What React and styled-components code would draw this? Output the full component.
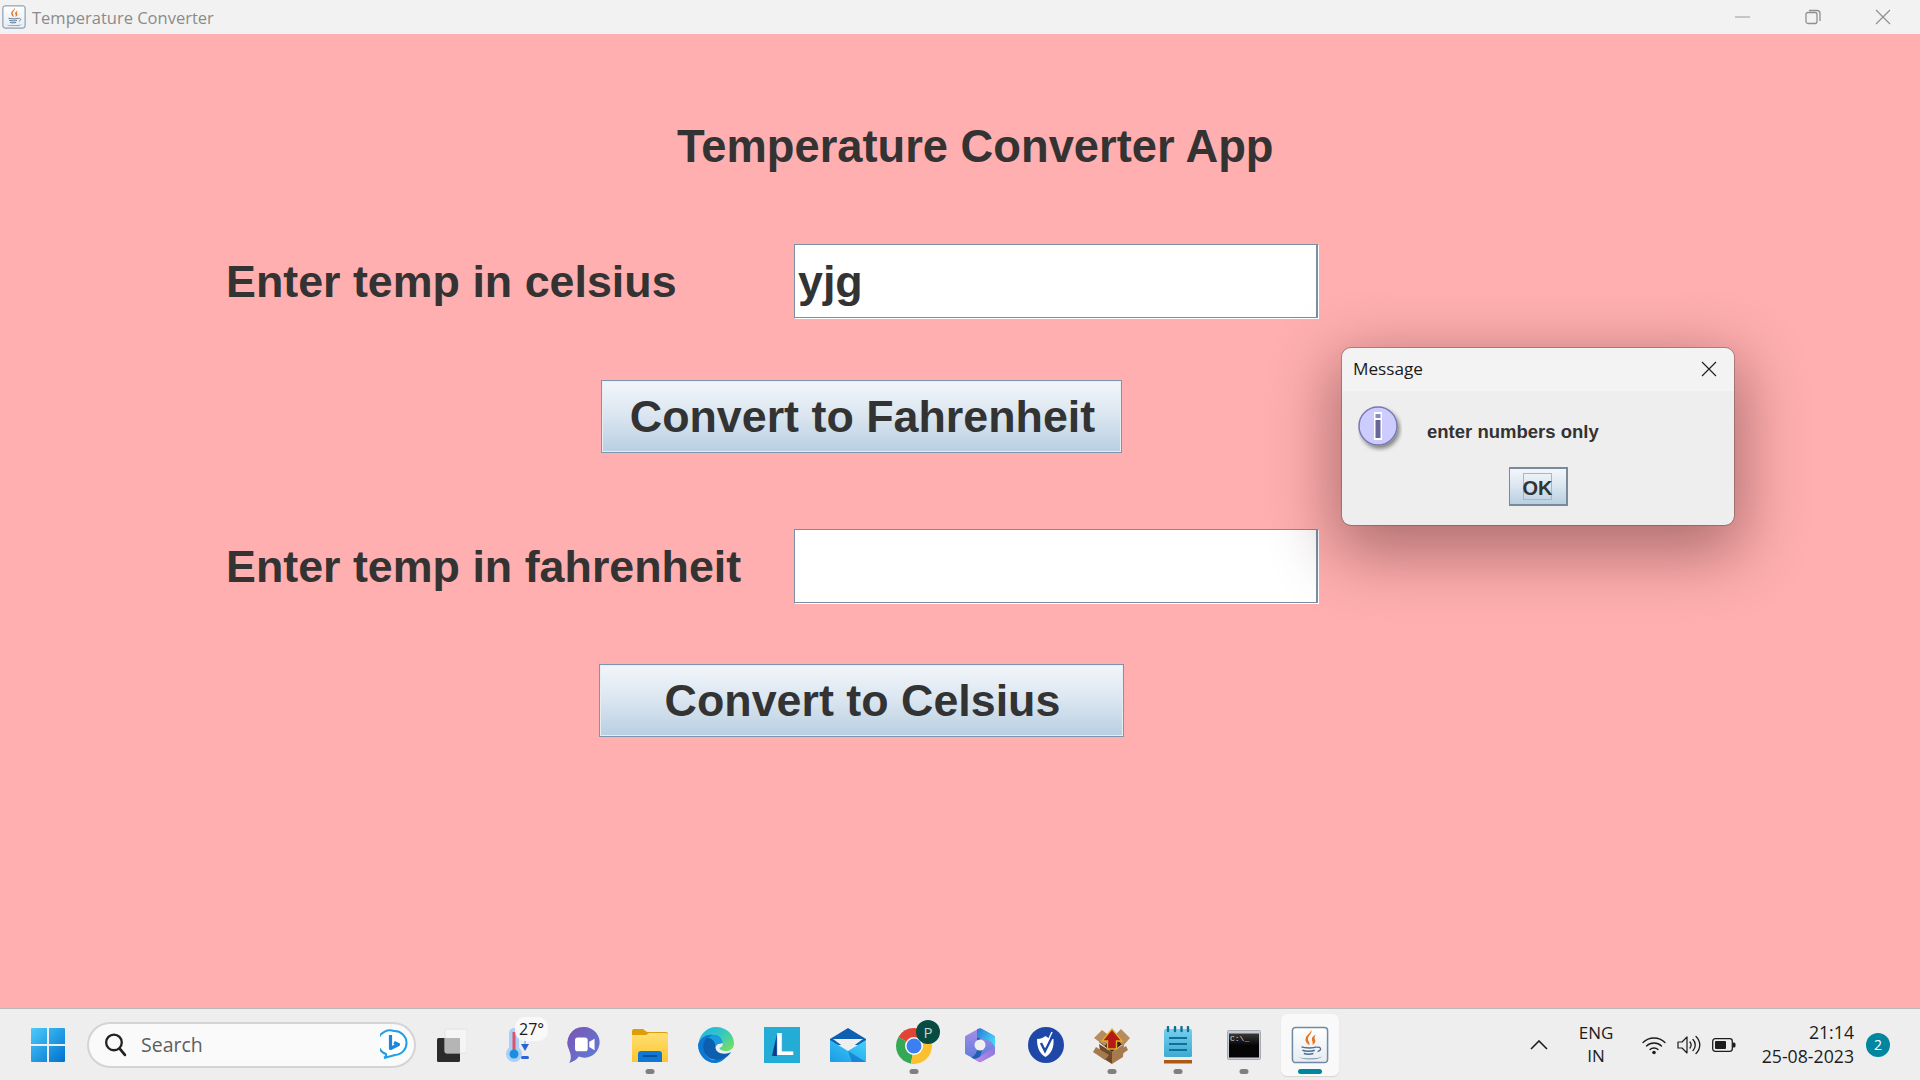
import styled, { createGlobalStyle } from "styled-components";

const GlobalStyle = createGlobalStyle`
  html, body { margin: 0; padding: 0; height: 100%; overflow: hidden; }
  body { font-family: "Liberation Sans", Arial, sans-serif; }
`;

const Screen = styled.div`
  position: relative;
  width: 1920px;
  height: 1080px;
  display: flex;
  flex-direction: column;
  background: #ffafaf;
`;

const TitleBar = styled.header`
  height: 34px;
  flex: none;
  display: flex;
  align-items: center;
  background: #f2f2f2;
  padding: 0 2px;
`;

const TitleText = styled.span`
  font-family: "Open Sans", sans-serif;
  font-size: 16.5px;
  color: #8b8b8b;
  flex: 1;
  margin: 0 0 0 6px;
`;

const WinButton = styled.div`
  width: 70px;
  height: 34px;
  display: flex;
  align-items: center;
  justify-content: center;
`;

const Main = styled.main`
  flex: 1;
  display: flex;
  flex-direction: column;
  color: #333333;
  font-weight: 700;
`;

const AppTitle = styled.h1`
  margin: 88px 0 0 677px;
  font-size: 45.3px;
  line-height: 50px;
  font-weight: 700;
`;

const FieldRow = styled.div`
  display: flex;
  align-items: center;
  padding-left: 226px;
  margin-top: ${(p) => p.$top}px;
`;

const FieldLabel = styled.label`
  width: 568px;
  font-size: 44.8px;
  line-height: 74px;
`;

const TextBox = styled.div`
  box-sizing: border-box;
  width: 524px;
  height: 74px;
  background: #ffffff;
  border: 1px solid #7a8fa3;
  border-right-width: 2px;
  box-shadow: 1px 1px 0 #ffffff;
  font-size: 44.8px;
  line-height: 73px;
  padding-left: 3px;
`;

const ButtonRow = styled.div`
  display: flex;
  padding-left: ${(p) => p.$left}px;
  margin-top: ${(p) => p.$top}px;
`;

const JavaButton = styled.div`
  box-sizing: border-box;
  width: ${(p) => p.$width}px;
  height: 73px;
  padding-left: 2px;
  display: flex;
  align-items: center;
  justify-content: center;
  border: 1px solid #7b96ad;
  box-shadow: inset 0 0 0 1px #e6eef5;
  background: linear-gradient(#f2f6fa 0%, #dde7f1 45%, #b8cfe2 100%);
  font-size: 44.8px;
`;

const Dialog = styled.section`
  position: absolute;
  left: 1342px;
  top: 348px;
  width: 392px;
  height: 177px;
  display: flex;
  flex-direction: column;
  border-radius: 9px;
  overflow: hidden;
  background: #eeeeee;
  outline: 1px solid rgba(90, 70, 70, 0.4);
  box-shadow: 0 20px 64px 8px rgba(60, 20, 20, 0.42);
`;

const DialogHead = styled.div`
  height: 43px;
  flex: none;
  box-sizing: border-box;
  display: flex;
  align-items: center;
  justify-content: space-between;
  padding: 0 17px 2px 11px;
  background: #f3f3f3;
  font-family: "Open Sans", sans-serif;
  font-size: 17.2px;
  color: #1a1a1a;
`;

const DialogBody = styled.div`
  flex: 1;
  display: flex;
  flex-direction: column;
  padding: 15px 16px 0;
`;

const MessageLine = styled.div`
  display: flex;
  align-items: center;
  height: 46px;
  gap: 25px;
`;

const MessageText = styled.span`
  font-size: 18.5px;
  font-weight: 700;
  color: #333333;
  margin-top: 5px;
`;

const OkButton = styled.div`
  box-sizing: border-box;
  align-self: center;
  width: 59px;
  height: 39px;
  margin: 15px 0 0 0;
  display: flex;
  align-items: center;
  justify-content: center;
  border: 2px solid #7a8a99;
  border-left-width: 1px;
  background: linear-gradient(#f2f6fa 0%, #dde7f1 45%, #b8cfe2 100%);
`;

const OkFocus = styled.span`
  box-sizing: border-box;
  width: 29px;
  height: 27px;
  padding-top: 4px;
  display: flex;
  align-items: center;
  justify-content: center;
  border: 1px solid #a3b8cc;
  font-size: 20px;
  font-weight: 700;
  color: #333333;
`;

const TaskBar = styled.footer`
  position: relative;
  height: 71px;
  flex: none;
  display: flex;
  align-items: center;
  background: #eeeeee;
  border-top: 1px solid #b9b9b9;
  padding-left: 15px;
`;

const Slot = styled.div`
  position: relative;
  height: 62px;
  flex: none;
  display: flex;
  align-items: center;
  justify-content: center;
  border-radius: 6px;
  background: ${(p) => (p.$active ? "#f9f9f9" : "transparent")};
  box-shadow: ${(p) => (p.$active ? "0 1px 1px #d5d5d5" : "none")};
  width: ${(p) => (p.$active ? "58px" : "66px")};
  margin-left: ${(p) => (p.$active ? "4px" : "0")};
`;

const Dot = styled.span`
  position: absolute;
  bottom: 2px;
  left: 50%;
  transform: translateX(-50%);
  width: ${(p) => (p.$active ? "24px" : "9px")};
  height: 5px;
  border-radius: 3px;
  background: ${(p) => (p.$active ? "#00869f" : "#7f7f7f")};
`;

const SearchBox = styled.div`
  box-sizing: border-box;
  width: 329px;
  height: 46px;
  flex: none;
  display: flex;
  align-items: center;
  margin: 0 3px 0 6px;
  padding: 0 6px 0 14px;
  border-radius: 23px;
  background: #fafafa;
  border: 2px solid #d4d4d4;
  font-family: "Open Sans", sans-serif;
  font-size: 19.5px;
  color: #5e5e5e;
  gap: 14px;
`;

const SearchLabel = styled.span`
  flex: 1;
`;

const WeatherTemp = styled.span`
  position: absolute;
  top: 3px;
  left: 30px;
  padding: 1px 4px;
  border-radius: 10px;
  background: rgba(250, 250, 250, 0.9);
  font-family: "Open Sans", sans-serif;
  font-size: 16px;
  color: #1a1a1a;
`;

const Tray = styled.div`
  margin-left: auto;
  display: flex;
  align-items: center;
  height: 100%;
  color: #1c1c1c;
  font-family: "Open Sans", sans-serif;
`;

const Lang = styled.div`
  width: 60px;
  margin: -2px 16px 0 18px;
  text-align: center;
  line-height: 23px;
  font-size: 17px;
`;

const TrayIcons = styled.div`
  display: flex;
  align-items: center;
  gap: 11px;
`;

const Clock = styled.div`
  width: 112px;
  margin: -2px 0 0 6px;
  text-align: right;
  line-height: 24px;
  font-size: 17.7px;
`;

const Badge = styled.span`
  width: 24px;
  height: 24px;
  margin: 0 30px 0 12px;
  border-radius: 50%;
  background: #00869f;
  color: #fff;
  font-size: 14px;
  display: flex;
  align-items: center;
  justify-content: center;
`;

const ChromeSvg = styled.svg`
  margin: -5px 0 0 10px;
`;

const JavaIcon = ({ size, id }) => (
  <svg width={size} height={size} viewBox="0 0 40 40">
    <defs>
      <linearGradient id={id} x1="0" y1="0" x2="0" y2="1">
        <stop offset="0" stopColor="#ffffff" />
        <stop offset="1" stopColor="#e6ecf2" />
      </linearGradient>
    </defs>
    <rect x="1.500" y="1.500" width="37" height="37" rx="3.500" fill={`url(#${id})`} stroke="#6f8aa3" strokeWidth="1.600" />
    <path d="M21 4c2.500 4-4.500 6.500-3 11 .6 1.800 1.800 3 1.500 5-3-1.500-5.200-4.500-3.800-8C17 9 21 7.500 21 4z" fill="#e8741c" />
    <path d="M26 9c-3.500 2-4.800 4-3.800 6.200.6 1.300 1 3 .3 4.800 2.800-1.500 3.800-3.700 2.600-6-.7-1.300 0-3.300.9-5z" fill="#e8741c" />
    <path d="M11 22c4 1.500 13 1.500 16 0M12 25.500c3 1.300 10 1.300 13 0M13.500 29c3 1 7 1 10 0" fill="none" stroke="#4b6f8f" strokeWidth="1.600" />
    <path d="M27 22.500c5-1 5.500 3 1 4.500" fill="none" stroke="#4b6f8f" strokeWidth="1.300" />
    <path d="M8 32.500c6 2.500 18 2.500 25-.5-5 4-20 4-25 .5z" fill="#4b6f8f" />
  </svg>
);

const CloseGlyph = ({ color = "#222", size = 16 }) => (
  <svg width={size} height={size} viewBox="0 0 16 16">
    <path d="M1 1l14 14M15 1L1 15" stroke={color} strokeWidth="1.200" fill="none" />
  </svg>
);

const StartIcon = () => (
  <svg width="36" height="36" viewBox="0 0 36 36">
    <defs>
      <linearGradient id="st" x1="0" y1="0" x2="1" y2="1">
        <stop offset="0" stopColor="#4bcbfa" />
        <stop offset="1" stopColor="#0071cf" />
      </linearGradient>
    </defs>
    <path d="M1 2a1 1 0 0 1 1-1h15v16H1zM19 1h15a1 1 0 0 1 1 1v15H19zM1 19h16v16H2a1 1 0 0 1-1-1zM19 19h16v15a1 1 0 0 1-1 1H19z" fill="url(#st)" />
  </svg>
);

const SearchIcon = () => (
  <svg width="24" height="25" viewBox="0 0 22 24">
    <circle cx="10" cy="10" r="7.500" fill="none" stroke="#222" strokeWidth="2.200" />
    <path d="M15.500 16l5 6" stroke="#222" strokeWidth="2.600" strokeLinecap="round" />
  </svg>
);

const BingIcon = () => (
  <svg width="28" height="32" viewBox="0 0 28 32">
    <path d="M14 2a12 12 0 0 1 1 24l-11 3c2-1 2.500-3 2-4A12 12 0 0 1 14 2z" fill="#fff" stroke="#1e9fe8" strokeWidth="2" />
    <path d="M10.500 6v13.500l8-4-4.500-2" fill="none" stroke="#1a86e0" strokeWidth="3.200" strokeLinejoin="round" />
  </svg>
);

const TaskViewIcon = () => (
  <svg width="30" height="34" viewBox="0 0 30 34">
    <rect x="0" y="10" width="23" height="24" rx="1.500" fill="#2b2b2b" />
    <rect x="8" y="1" width="22" height="24" rx="1.500" fill="#f6f6f6" fillOpacity=".85" stroke="#e2e2e2" />
    <rect x="8" y="10" width="15" height="15" fill="#b5b5b5" />
  </svg>
);

const WeatherIcon = () => (
  <svg width="26" height="36" viewBox="0 0 26 36">
    <rect x="4" y="1" width="10" height="26" rx="5" fill="#a9d1f7" />
    <circle cx="9" cy="27" r="8" fill="#a9d1f7" />
    <rect x="7.500" y="5" width="3" height="18" fill="#e2506a" />
    <circle cx="9" cy="27" r="4.500" fill="#1a8ee0" />
    <path d="M20 5v14" stroke="#9cc6f0" strokeWidth="2" />
    <path d="M16 17h8l-4 7z" fill="#2a62d8" />
    <rect x="16" y="29" width="8" height="3" rx="1.500" fill="#2a62d8" />
  </svg>
);

const MeetIcon = () => (
  <svg width="36" height="38" viewBox="0 0 30 36">
    <defs>
      <linearGradient id="mt" x1="0" y1="0" x2="1" y2="1">
        <stop offset="0" stopColor="#7a54b0" />
        <stop offset="1" stopColor="#5d7fdc" />
      </linearGradient>
    </defs>
    <path d="M15 1a14.500 14.500 0 1 1-5 28c-2 3-5 5-9 6 2-4 2-7 0-12A15 15 0 0 1 15 1z" fill="url(#mt)" />
    <rect x="6.500" y="11" width="12" height="13" rx="2.500" fill="#fff" />
    <path d="M20 15l5-3v11l-5-3z" fill="#fff" />
  </svg>
);

const FolderIcon = () => (
  <svg width="36" height="34" viewBox="0 0 36 34">
    <defs>
      <linearGradient id="fd" x1="0" y1="0" x2="0" y2="1">
        <stop offset="0" stopColor="#ffdf72" />
        <stop offset="1" stopColor="#fdc52f" />
      </linearGradient>
    </defs>
    <path d="M0 3a2 2 0 0 1 2-2h9l4 3h19a2 2 0 0 1 2 2v4H0z" fill="#dc9f08" />
    <path d="M0 7h14l3-2h17a2 2 0 0 1 2 2v27H0z" fill="url(#fd)" />
    <path d="M6 34v-8a3 3 0 0 1 3-3h18a3 3 0 0 1 3 3v8z" fill="#0f78d4" />
    <rect x="11" y="27" width="14" height="2" fill="#0a4f9a" />
  </svg>
);

const EdgeIcon = () => (
  <svg width="36" height="36" viewBox="0 0 36 36">
    <defs>
      <linearGradient id="eg" x1="0" y1="0" x2="1" y2=".8">
        <stop offset="0" stopColor="#1fb0e8" />
        <stop offset=".55" stopColor="#35c8c0" />
        <stop offset="1" stopColor="#72e060" />
      </linearGradient>
    </defs>
    <path d="M18 0C29 0 36 8 36 16.500c0 5-4 8-9 7.500-3.500-.3-5.500-1.500-5.500-3 3-1 3.500-3 3-5C23.500 11 19 8 14 8 7 8 2 12 .5 16 2 7 9 0 18 0z" fill="url(#eg)" />
    <path d="M.5 16C3 10 9 7 15 8c-6 2-10 7-9.500 13 .6 8 8 14 16 11.500 3-1 5-1.500 7-3-3 4-7 6.500-12 6.500C8 36 0 28 0 18c0-.7.200-1.400.5-2z" fill="#0c78d2" />
    <path d="M15 8c5-.3 9 3 9.500 8-4 .2-7 1.700-7 4.500 0 4 5 7 11 6 2.500-.4 3-.5 4.500-1.500-2 4-7 7.500-13 8-8 .6-15-5-15-13C5 14 9 9 15 8z" fill="#0b5fae" />
    <path d="M15 8c5-.3 9 3 9.500 8-4 .2-7 1.700-7 4.500 0-5-2-9-8-9.500C11 9.500 13 8.500 15 8z" fill="#1a9be0" />
  </svg>
);

const LIcon = () => (
  <svg width="36" height="36" viewBox="0 0 36 36">
    <rect width="36" height="36" fill="#23acd6" />
    <path d="M13 7L8 29h5z" fill="#123a80" />
    <text x="11" y="28" fontFamily="Liberation Sans" fontWeight="700" fontSize="31" fill="#fff">L</text>
  </svg>
);

const MailIcon = () => (
  <svg width="36" height="34" viewBox="0 0 36 34">
    <defs>
      <linearGradient id="ml" x1="0" y1="1" x2="1" y2="0">
        <stop offset="0" stopColor="#1a9be6" />
        <stop offset="1" stopColor="#44d2f8" />
      </linearGradient>
    </defs>
    <path d="M18 0l18 11v6H0v-6z" fill="#0d5fb0" />
    <path d="M3 11h30L18 22z" fill="#efefef" />
    <path d="M0 12l18 11 18-11v21a1 1 0 0 1-1 1H1a1 1 0 0 1-1-1z" fill="url(#ml)" />
    <path d="M18 23l18 11H22z" fill="#1278cd" opacity=".75" />
  </svg>
);

const ChromeIcon = () => (
  <ChromeSvg width="46" height="46" viewBox="0 0 46 46">
    <path d="M18 27L33.600 18A18 18 0 0 0 2.400 18z" fill="#e04434" />
    <path d="M18 27L2.400 18A18 18 0 0 0 15 44.700z" fill="#34a853" />
    <path d="M18 27L15 44.700A18 18 0 0 0 33.600 18z" fill="#fbc02d" />
    <circle cx="18" cy="27" r="9" fill="#fff" />
    <circle cx="18" cy="27" r="7.500" fill="#3b7ff0" />
    <circle cx="32" cy="13" r="12" fill="#064c42" />
    <text x="27.500" y="18.500" fontFamily="Open Sans" fontSize="15" fill="#c9d6d2">P</text>
  </ChromeSvg>
);

const M365Icon = () => (
  <svg width="32" height="36" viewBox="0 0 32 36">
    <defs>
      <linearGradient id="m3a" x1="0" y1="0" x2="1" y2=".6">
        <stop offset="0" stopColor="#2a78d8" />
        <stop offset="1" stopColor="#44d6f4" />
      </linearGradient>
      <linearGradient id="m3b" x1="0" y1="0" x2="0" y2="1">
        <stop offset="0" stopColor="#a58de6" />
        <stop offset="1" stopColor="#5a7cdc" />
      </linearGradient>
      <linearGradient id="m3c" x1="0" y1="0" x2="1" y2="0">
        <stop offset="0" stopColor="#c08ee8" />
        <stop offset="1" stopColor="#9078dc" />
      </linearGradient>
    </defs>
    <path d="M16 2.500L29.500 10v16L16 33.500 2.500 26V10z" fill="url(#m3b)" stroke="url(#m3b)" strokeWidth="3" strokeLinejoin="round" />
    <path d="M13 2.500c2-1.500 4-1.500 6 0L29 8c1.500 1 2 2 2 3.500V21c-1-4-4-7-8-8.500L16 11l-3-.5z" fill="url(#m3a)" />
    <path d="M31 20v5c0 1.500-.5 2.500-2 3.500L19 34c-2 1.500-4 1.500-6 0l-4-2.500c3 .5 5-.5 7-2l7-4.500c3-2 6-3 8-5z" fill="url(#m3c)" />
    <path d="M13 10.500V23c-.5 3-3 6.500-5.500 7.500L9 31.500c3 .5 5-.5 7-2l2-6-2-12.500z" fill="#1f5fb5" />
    <circle cx="16" cy="18" r="5.500" fill="#efefef" />
  </svg>
);

const ShieldIcon = () => (
  <svg width="36" height="36" viewBox="0 0 36 36">
    <circle cx="18" cy="18" r="18" fill="#1f47a8" />
    <path d="M9 12c3.500 0 6-1 8.500-3 2.500 2 4 3 8 3 .5 8-1.500 14-8 18-6.500-4-8.500-10-8.500-18z" fill="#fff" />
    <path d="M13 16l4 8 9-18" fill="none" stroke="#1f47a8" strokeWidth="2.400" />
    <path d="M24 5l-7 15" fill="none" stroke="#fff" strokeWidth="1.400" />
  </svg>
);

const BoxIcon = () => (
  <svg width="38" height="38" viewBox="0 0 38 38">
    <path d="M6 16l13-6 13 6-13 10z" fill="#3a2415" />
    <path d="M6 18l13 8v12L8 31z" fill="#6f4a2a" />
    <path d="M19 26l12-8-1 13-11 7z" fill="#a87a4c" />
    <path d="M1 12l8-8 9 7-6 9zM23 8l5-5 9 9-7 8-6-7z" fill="#b98c5e" />
    <path d="M14.500 23v-8H9L19 3l10 12h-5.500v8z" fill="#b51a16" stroke="#e0b020" strokeWidth="1.400" />
    <path d="M3 21l13 8-4 5-12-8zM33 20l-14 8 3 5 13-9z" fill="#a67a4e" />
  </svg>
);

const NotepadIcon = () => (
  <svg width="30" height="38" viewBox="0 0 30 38">
    <defs>
      <linearGradient id="np" x1="0" y1="0" x2="0" y2="1">
        <stop offset="0" stopColor="#74cfee" />
        <stop offset="1" stopColor="#3eaad2" />
      </linearGradient>
    </defs>
    <rect x="1" y="3" width="28" height="28" rx="1.500" fill="url(#np)" />
    <rect x="1" y="34" width="28" height="3.500" fill="#ad5a12" />
    <path d="M5 1v4M12 1v4M18.500 1v4M25 1v4" stroke="#0f6f94" strokeWidth="2.400" strokeLinecap="round" />
    <path d="M6 12h18M6 18h18M6 24h18" stroke="#0f6f94" strokeWidth="2" />
  </svg>
);

const CmdIcon = () => (
  <svg width="34" height="30" viewBox="0 0 34 30">
    <defs>
      <linearGradient id="cm" x1="0" y1="0" x2="0" y2="1">
        <stop offset="0" stopColor="#3a3a3a" />
        <stop offset=".5" stopColor="#050505" />
      </linearGradient>
    </defs>
    <rect x=".5" y=".5" width="33" height="29" rx="1" fill="#c9cdd3" stroke="#a7abb1" />
    <rect x="2" y="3.500" width="30" height="24" fill="url(#cm)" />
    <text x="3" y="11" fontFamily="Liberation Mono" fontSize="8" fill="#d8d8d8">C:\_</text>
  </svg>
);

const WifiIcon = () => (
  <svg width="24" height="20" viewBox="0 0 24 20">
    <path d="M1 7.500c6-6 16-6 22 0M4.500 11c4-4 11-4 15 0M8 14.500c2-2 6-2 8 0" fill="none" stroke="#1c1c1c" strokeWidth="1.300" strokeLinecap="round" />
    <circle cx="12" cy="17.500" r="1.800" fill="#1c1c1c" />
  </svg>
);

const SpeakerIcon = () => (
  <svg width="24" height="20" viewBox="0 0 24 20">
    <path d="M1 7h4l5-5v16l-5-5H1z" fill="none" stroke="#1c1c1c" strokeWidth="1.200" strokeLinejoin="round" />
    <path d="M13 7c1.500 2 1.500 4 0 6M16 4.500c3 3 3 8 0 11M19 1.500c5 5 5 12 0 17" fill="none" stroke="#1c1c1c" strokeWidth="1.300" strokeLinecap="round" />
  </svg>
);

const BatteryIcon = () => (
  <svg width="24" height="16" viewBox="0 0 24 16">
    <rect x=".7" y="1.700" width="19.600" height="12.600" rx="2.500" fill="none" stroke="#1c1c1c" strokeWidth="1.300" />
    <rect x="3" y="4" width="11" height="8" rx="1" fill="#1c1c1c" />
    <path d="M21 5.500h1a1.500 1.500 0 0 1 1.500 1.500v2A1.500 1.500 0 0 1 22 10.500h-1z" fill="#1c1c1c" />
  </svg>
);

const pinned = [
  { key: "folder", icon: <FolderIcon />, dot: true },
  { key: "edge", icon: <EdgeIcon /> },
  { key: "l", icon: <LIcon /> },
  { key: "mail", icon: <MailIcon /> },
  { key: "chrome", icon: <ChromeIcon />, dot: true },
  { key: "m365", icon: <M365Icon /> },
  { key: "shield", icon: <ShieldIcon /> },
  { key: "box", icon: <BoxIcon />, dot: true },
  { key: "notepad", icon: <NotepadIcon />, dot: true },
  { key: "cmd", icon: <CmdIcon />, dot: true },
];

export default function App() {
  return (
    <Screen>
      <GlobalStyle />
      <TitleBar>
        <JavaIcon size={24} id="javaSmall" />
        <TitleText>Temperature Converter</TitleText>
        <WinButton>
          <svg width="16" height="16" viewBox="0 0 16 16">
            <path d="M0 8h15" stroke="#9a9a9a" strokeWidth="1" />
          </svg>
        </WinButton>
        <WinButton>
          <svg width="16" height="16" viewBox="0 0 16 16">
            <rect x="1" y="3.500" width="11" height="11" rx="2" fill="none" stroke="#8f8f8f" strokeWidth="1.300" />
            <path d="M4 1.500h8a3 3 0 0 1 3 3V12" fill="none" stroke="#8f8f8f" strokeWidth="1.300" />
          </svg>
        </WinButton>
        <WinButton>
          <CloseGlyph color="#8f8f8f" />
        </WinButton>
      </TitleBar>

      <Main>
        <AppTitle>Temperature Converter App</AppTitle>
        <FieldRow $top={72}>
          <FieldLabel>Enter temp in celsius</FieldLabel>
          <TextBox>yjg</TextBox>
        </FieldRow>
        <ButtonRow $left={601} $top={62}>
          <JavaButton $width={521}>Convert to Fahrenheit</JavaButton>
        </ButtonRow>
        <FieldRow $top={76}>
          <FieldLabel>Enter temp in fahrenheit</FieldLabel>
          <TextBox />
        </FieldRow>
        <ButtonRow $left={599} $top={61}>
          <JavaButton $width={525}>Convert to Celsius</JavaButton>
        </ButtonRow>
      </Main>

      <Dialog>
        <DialogHead>
          Message
          <CloseGlyph color="#222" />
        </DialogHead>
        <DialogBody>
          <MessageLine>
            <svg width="44" height="46" viewBox="0 0 44 46">
              <defs>
                <filter id="is" x="-30%" y="-30%" width="160%" height="160%">
                  <feDropShadow dx="2" dy="3" stdDeviation="2" floodColor="#000" floodOpacity=".45" />
                </filter>
              </defs>
              <circle cx="20" cy="20" r="19" fill="#ccccff" stroke="#7a7ab0" strokeWidth="1.500" filter="url(#is)" />
              <rect x="16" y="6" width="8" height="28" fill="#ffffff" />
              <rect x="17.500" y="8" width="5" height="4" fill="#8a8ac0" />
              <rect x="17.500" y="14" width="5" height="18" fill="#66669a" />
            </svg>
            <MessageText>enter numbers only</MessageText>
          </MessageLine>
          <OkButton>
            <OkFocus>OK</OkFocus>
          </OkButton>
        </DialogBody>
      </Dialog>

      <TaskBar>
        <Slot><StartIcon /></Slot>
        <SearchBox>
          <SearchIcon />
          <SearchLabel>Search</SearchLabel>
          <BingIcon />
        </SearchBox>
        <Slot><TaskViewIcon /></Slot>
        <Slot>
          <WeatherIcon />
          <WeatherTemp>27°</WeatherTemp>
        </Slot>
        <Slot><MeetIcon /></Slot>
        {pinned.map((item) => (
          <Slot key={item.key}>
            {item.icon}
            {item.dot && <Dot />}
          </Slot>
        ))}
        <Slot $active>
          <JavaIcon size={38} id="javaTask" />
          <Dot $active />
        </Slot>
        <Tray>
          <svg width="18" height="10" viewBox="0 0 18 10">
            <path d="M1 9l8-8 8 8" fill="none" stroke="#1c1c1c" strokeWidth="1.600" />
          </svg>
          <Lang>ENG<br />IN</Lang>
          <TrayIcons>
            <WifiIcon />
            <SpeakerIcon />
            <BatteryIcon />
          </TrayIcons>
          <Clock>21:14<br />25-08-2023</Clock>
          <Badge>2</Badge>
        </Tray>
      </TaskBar>
    </Screen>
  );
}
